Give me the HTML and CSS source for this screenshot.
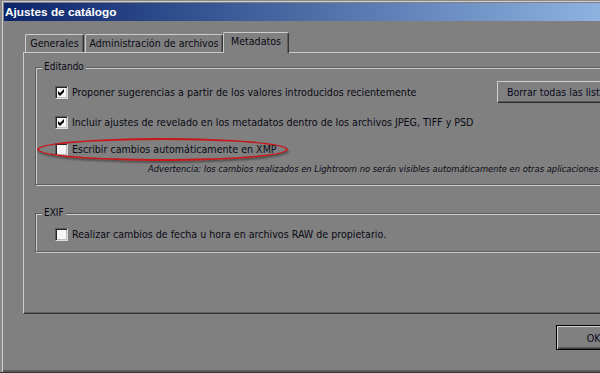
FILE: index.html
```html
<!DOCTYPE html>
<html>
<head>
    <title>Ajustes de catálogo</title>
    <link rel="stylesheet" href="styles.css">
</head>
<body>
    <div class="window">
        <div class="titlebar">Ajustes de catálogo</div>

        <div class="tabs">
            <div class="tab tab-general">Generales</div>
            <div class="tab tab-files">Administración de archivos</div>
            <div class="tab tab-meta active">Metadatos</div>
        </div>

        <div class="panel">
            <div class="group group-edit">
                <span class="legend">Editando</span>

                <div class="row row-first">
                    <span class="check"><svg viewBox="0 0 7 7" width="7" height="7"><path d="M0 2 L2 4 L6 0 L6 3 L2 7 L0 5 Z" fill="#000"/></svg></span>
                    <span class="label label-wide">Proponer sugerencias a partir de los valores introducidos recientemente</span>
                    <button class="btn btn-clear">Borrar todas las listas de sugerencias</button>
                </div>
                <div class="row row-second">
                    <span class="check"><svg viewBox="0 0 7 7" width="7" height="7"><path d="M0 2 L2 4 L6 0 L6 3 L2 7 L0 5 Z" fill="#000"/></svg></span>
                    <span class="label">Incluir ajustes de revelado en los metadatos dentro de los archivos JPEG, TIFF y PSD</span>
                </div>
                <div class="row row-third">
                    <span class="check"></span>
                    <span class="label">Escribir cambios automáticamente en XMP</span>
                </div>
                <div class="warning">Advertencia: los cambios realizados en Lightroom no serán visibles automáticamente en otras aplicaciones.</div>

                <div class="highlight"></div>
            </div>

            <div class="group group-exif">
                <span class="legend">EXIF</span>
                <div class="row row-exif">
                    <span class="check"></span>
                    <span class="label">Realizar cambios de fecha u hora en archivos RAW de propietario.</span>
                </div>
            </div>
        </div>

        <div class="footer">
            <button class="btn btn-ok">OK</button>
        </div>
    </div>
</body>
</html>
```

FILE: styles.css
```css
body {
    margin: 0;
    width: 600px;
    height: 373px;
    overflow: hidden;
    background-color: #808080;
    color: #0a0a14;
    font-family: "DejaVu Sans Condensed", "DejaVu Sans", sans-serif;
    font-size: 10.6px;
}
.window {
    box-sizing: border-box;
    width: 720px;
    height: 373px;
    padding: 3px 0 0 4px;
    border-bottom: 1px solid #333333;
    box-shadow: inset 2px 1px 0 #8a8a8a, inset 3px 2px 0 #cfcfcf, inset 0 -2px 0 #5a5a5a;
}
.titlebar {
    height: 18px;
    line-height: 18px;
    padding-left: 1px;
    background: linear-gradient(to right, #0a246a, #8db2e0 83%, #a6caf0);
    color: #ffffff;
    font-family: "Liberation Sans", Arial, sans-serif;
    font-weight: bold;
    font-size: 11.8px;
}

/* tabs */
.tabs {
    display: flex;
    align-items: flex-end;
    height: 20px;
    margin: 11px 0 0 21px;
}
.tab {
    box-sizing: border-box;
    height: 18px;
    line-height: 17px;
    text-align: center;
    border-top: 1px solid #cccccc;
    border-left: 1px solid #cccccc;
    border-right: 1px solid #363636;
    border-radius: 2px 2px 0 0;
    box-shadow: inset -1px 0 0 #5e5e5e;
}
.tab-general {
    width: 59px;
}
.tab-files {
    width: 138px;
    margin-left: 1px;
}
.tab-meta {
    width: 66px;
}
.tab.active {
    position: relative;
    z-index: 1;
    height: 21px;
    margin-bottom: -1px;
    background-color: #808080;
}

/* panel */
.panel {
    box-sizing: border-box;
    height: 262px;
    margin-left: 19px;
    padding: 14px 0 0 11px;
    border-top: 1px solid #cccccc;
    border-left: 1px solid #cccccc;
    border-bottom: 1px solid #363636;
    box-shadow: inset 0 -1px 0 #5e5e5e;
}
.group {
    position: relative;
    padding-left: 19px;
    border: 1px solid #5c5c5c;
    box-shadow: 1px 1px 0 #cdcdcd, inset 1px 1px 0 #cdcdcd;
}
.group-edit {
    padding-top: 13px;
    padding-bottom: 9px;
}
.group-exif {
    margin-top: 28px;
    padding-top: 11px;
    padding-bottom: 8px;
}
.legend {
    position: absolute;
    top: -7px;
    left: 6px;
    padding: 0 2px;
    line-height: 12px;
    font-size: 10px;
    background-color: #808080;
}

.row {
    display: flex;
    align-items: center;
    gap: 4px;
    height: 22px;
    white-space: nowrap;
}
.row-second {
    margin-top: 8px;
}
.row-third {
    margin-top: 5px;
}
.row-exif {
    height: 18px;
}
.label-wide {
    width: 421px;
}
.check {
    box-sizing: border-box;
    flex: none;
    display: flex;
    align-items: center;
    justify-content: center;
    width: 13px;
    height: 13px;
    background-color: #f6f6f6;
    border-top: 1px solid #5a5a5a;
    border-left: 1px solid #5a5a5a;
    border-right: 1px solid #dcdcdc;
    border-bottom: 1px solid #dcdcdc;
    box-shadow: inset 1px 1px 0 #262626, inset -1px -1px 0 #bdbdbd;
}
.warning {
    margin-top: 3px;
    padding-left: 93px;
    line-height: 12px;
    font-size: 9.3px;
    font-style: italic;
    white-space: nowrap;
}
.highlight {
    position: absolute;
    top: 70px;
    left: 1px;
    box-sizing: border-box;
    width: 251px;
    height: 23px;
    border: 2px solid #c8161b;
    border-radius: 50%;
    box-shadow: 1px 2px 2px rgba(0, 0, 0, 0.35);
}

/* buttons */
.btn {
    box-sizing: border-box;
    flex: none;
    padding: 0;
    font-family: inherit;
    font-size: inherit;
    color: #0a0a20;
    background-color: #808080;
    text-align: left;
}
.btn-clear {
    height: 22px;
    padding-left: 9px;
    border-top: 1px solid #d0d0d0;
    border-left: 1px solid #d0d0d0;
    border-right: 1px solid #2c2c2c;
    border-bottom: 1px solid #2c2c2c;
    box-shadow: inset -1px -1px 0 #5a5a5a;
}
.footer {
    margin: 11px 0 0 552px;
}
.btn-ok {
    width: 75px;
    height: 25px;
    text-align: center;
    border: 1px solid #000000;
    box-shadow: inset 1px 1px 0 #d4d4d4, inset -1px -1px 0 #3a3a3a, inset -2px -2px 0 #5e5e5e;
}
```
